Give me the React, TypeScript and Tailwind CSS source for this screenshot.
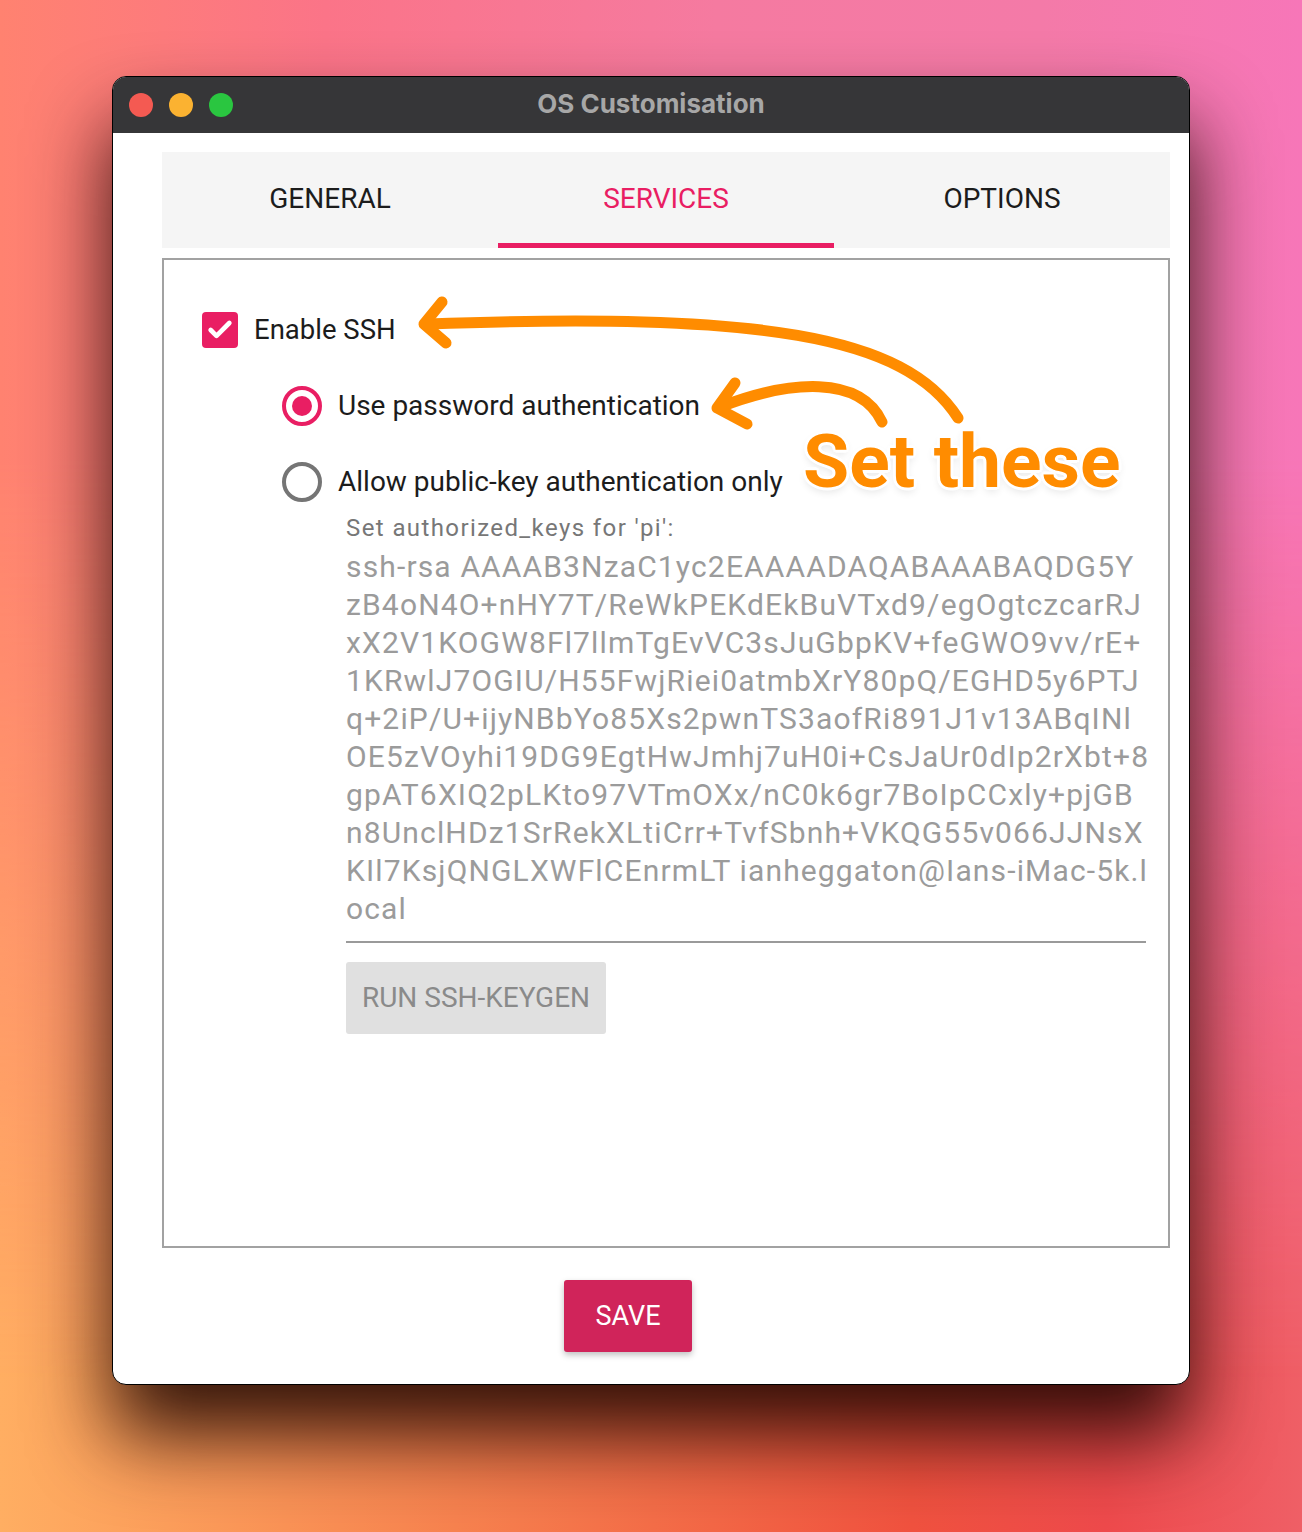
import { Check } from "lucide-react";

const KEY_LINES = [
  "ssh-rsa AAAAB3NzaC1yc2EAAAADAQABAAABAQDG5Y",
  "zB4oN4O+nHY7T/ReWkPEKdEkBuVTxd9/egOgtczcarRJ",
  "xX2V1KOGW8Fl7llmTgEvVC3sJuGbpKV+feGWO9vv/rE+",
  "1KRwlJ7OGIU/H55FwjRiei0atmbXrY80pQ/EGHD5y6PTJ",
  "q+2iP/U+ijyNBbYo85Xs2pwnTS3aofRi891J1v13ABqINl",
  "OE5zVOyhi19DG9EgtHwJmhj7uH0i+CsJaUr0dIp2rXbt+8",
  "gpAT6XIQ2pLKto97VTmOXx/nC0k6gr7BoIpCCxly+pjGB",
  "n8UnclHDz1SrRekXLtiCrr+TvfSbnh+VKQG55v066JJNsX",
  "KIl7KsjQNGLXWFlCEnrmLT ianheggaton@Ians-iMac-5k.l",
  "ocal",
];

const TABS = ["GENERAL", "SERVICES", "OPTIONS"];

function Annotation() {
  return (
    <div className="pointer-events-none absolute inset-0">
      <svg className="absolute left-0 top-0" width="1302" height="1532" viewBox="0 0 1302 1532">
        <g fill="none" stroke="#ff8c00" strokeWidth="11" strokeLinecap="round" strokeLinejoin="round">
          <path d="M958 418 C 905 335, 760 312, 428 324" />
          <path d="M442 302 L 424 324 L 446 343" />
          <path d="M882 422 C 860 375, 790 380, 720 407" />
          <path d="M735 383 L 717 408 L 747 424" />
        </g>
      </svg>
      <div
        className="absolute left-[803px] top-[424px] text-[75px] font-bold leading-none text-[#ff8c00] [font-family:Roboto,'Liberation_Sans',sans-serif]"
        style={{
          textShadow:
            "0 0 3px #fff, 2px 2px 0 #fff, -2px -2px 0 #fff, 2px -2px 0 #fff, -2px 2px 0 #fff, 3px 0 0 #fff, -3px 0 0 #fff, 0 3px 0 #fff, 0 -3px 0 #fff, 0 4px 8px rgba(0,0,0,0.12)",
        }}
      >
        Set these
      </div>
    </div>
  );
}

export default function App() {
  return (
    <div className="relative h-[1532px] w-[1302px] overflow-hidden bg-[linear-gradient(to_right,#ffae62_0%,#f7824f_35%,#f0523f_70%,#ee4a4c_85%,#ef5f66_100%)] [font-family:Roboto,'Liberation_Sans',sans-serif]">
      <div className="absolute inset-0 bg-[linear-gradient(to_right,#ff8270_0%,#fb7488_25%,#f57aa0_55%,#f47aa8_80%,#f776b8_100%)] [mask-image:linear-gradient(to_bottom,black_0%,black_30%,transparent_90%)]" />

      <div className="relative flex justify-center pt-[76px]">
        <div className="w-[1078px] overflow-hidden rounded-[14px] border border-black bg-white shadow-[0_50px_80px_rgba(30,5,0,0.9)]">
          {/* title bar */}
          <div className="relative flex h-[56px] items-center bg-[#363638]">
            <div className="flex items-center gap-[16px] pl-[16px]">
              <span className="h-[24px] w-[24px] rounded-full bg-[#f45a52]" />
              <span className="h-[24px] w-[24px] rounded-full bg-[#fbb231]" />
              <span className="h-[24px] w-[24px] rounded-full bg-[#2ac640]" />
            </div>
            <div className="absolute inset-0 flex items-center justify-center pb-[3px] text-[26px] font-bold text-[#a7a7a7] [font-family:Inter,Roboto,sans-serif]">
              OS Customisation
            </div>
          </div>

          <div className="pl-[49px] pr-[19px] pt-[19px] pb-[32px]">
            {/* tabs */}
            <div className="grid grid-cols-3 bg-[#f5f5f5]">
              {TABS.map((t) => (
                <div key={t} className="flex h-[96px] flex-col">
                  <div
                    className={`flex flex-1 items-center justify-center pt-[3px] text-[28px] ${
                      t === "SERVICES" ? "text-[#e91e63]" : "text-[#1c1c1c]"
                    }`}
                  >
                    {t}
                  </div>
                  <div className={`h-[5px] ${t === "SERVICES" ? "bg-[#e91e63]" : ""}`} />
                </div>
              ))}
            </div>

            {/* panel */}
            <div className="mt-[10px] h-[990px] border-2 border-[#a2a2a2] pl-[38px] pt-[49px] pr-[22px]">
              <div className="flex items-center gap-[16px]">
                <div className="flex h-[36px] w-[36px] items-center justify-center rounded-[4px] bg-[#e91e63]">
                  <Check className="h-[28px] w-[28px] text-white" strokeWidth={4} />
                </div>
                <span className="text-[27.5px] text-[#1c1c1c]">Enable SSH</span>
              </div>

              <div className="ml-[80px] mt-[35px] flex items-center gap-[16px]">
                <div className="flex h-[40px] w-[40px] items-center justify-center rounded-full border-[4px] border-[#e91e63]">
                  <div className="h-[20px] w-[20px] rounded-full bg-[#e91e63]" />
                </div>
                <span className="text-[28px] text-[#1c1c1c]">Use password authentication</span>
              </div>

              <div className="ml-[80px] mt-[34px] flex items-center gap-[16px]">
                <div className="h-[40px] w-[40px] rounded-full border-[4px] border-[#757575]" />
                <span className="text-[28px] text-[#1c1c1c]">Allow public-key authentication only</span>
              </div>

              <div className="ml-[144px]">
                <div className="mt-[7px] text-[24px] tracking-[1.4px] text-[#777777]">Set authorized_keys for 'pi':</div>
                <div className="mt-[2px] border-b-2 border-[#9a9a9a] pb-[13px] text-[30px] leading-[38px] tracking-[1.15px] text-[#9b9b9b]">
                  {KEY_LINES.map((l, i) => (
                    <div key={i} className="whitespace-nowrap">
                      {l}
                    </div>
                  ))}
                </div>
                <div className="mt-[19px] flex h-[72px] w-[260px] items-center justify-center rounded-[3px] bg-[#e0e0e0] text-[28px] text-[#8a8a8a]">
                  RUN SSH-KEYGEN
                </div>
              </div>
            </div>

            <div className="mt-[32px] flex">
              <div className="ml-[402px] flex h-[72px] w-[128px] items-center justify-center rounded-[3px] bg-[#d0245a] text-[27px] text-white shadow-[0_3px_6px_rgba(0,0,0,0.25)]">
                SAVE
              </div>
            </div>
          </div>
        </div>
      </div>

      <Annotation />
    </div>
  );
}
